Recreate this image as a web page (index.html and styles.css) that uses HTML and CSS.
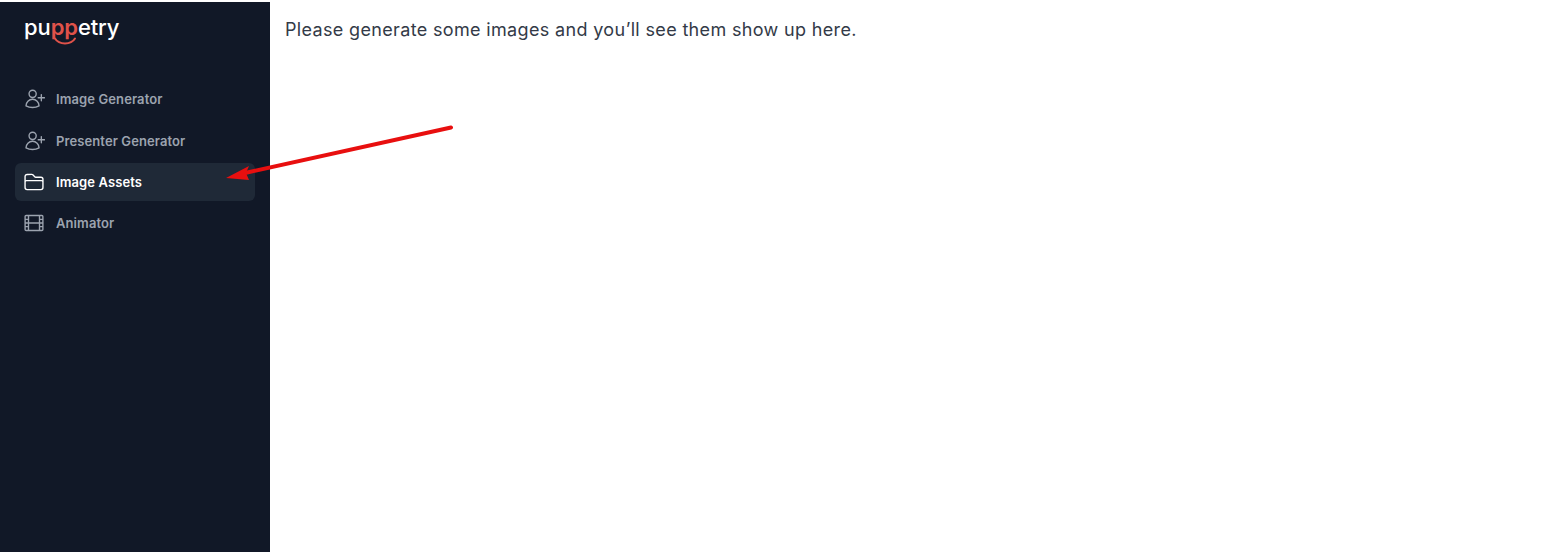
FILE: index.html
```html
<!DOCTYPE html>
<html lang="en">
<head>
<meta charset="utf-8">
<title>Puppetry</title>
<link rel="stylesheet" href="styles.css">
</head>
<body>
<div class="app">
  <aside class="sidebar">
    <div class="logo">
      <span class="logo-text">pu<span class="logo-pp">pp</span>etry</span>
      <svg class="logo-smile" viewBox="0 0 24 10" width="24" height="10" aria-hidden="true"><path d="M2 1.500C6 8 18 8 22 1.500" fill="none" stroke="#e0524a" stroke-width="2" stroke-linecap="round"/></svg>
    </div>
    <nav class="nav">
      <a class="nav-item">
        <svg class="nav-icon" viewBox="0 0 24 24" aria-hidden="true"><path d="M20 7.200v6.800M16.600 10.600h6.800M14.400 6.400a3.900 3.900 0 1 1-7.800 0 3.900 3.900 0 0 1 7.800 0ZM3.300 19.400a7.100 7.100 0 0 1 14.200 0v.100c-2.100 1.200-4.500 1.800-7.100 1.800s-5-.600-7.100-1.800v-.100Z"/></svg>
        <span>Image Generator</span>
      </a>
      <a class="nav-item">
        <svg class="nav-icon" viewBox="0 0 24 24" aria-hidden="true"><path d="M20 7.200v6.800M16.600 10.600h6.800M14.400 6.400a3.900 3.900 0 1 1-7.800 0 3.900 3.900 0 0 1 7.800 0ZM3.300 19.400a7.100 7.100 0 0 1 14.200 0v.100c-2.100 1.200-4.500 1.800-7.100 1.800s-5-.600-7.100-1.800v-.100Z"/></svg>
        <span>Presenter Generator</span>
      </a>
      <a class="nav-item active">
        <svg class="nav-icon" viewBox="0 0 24 24" aria-hidden="true"><path d="M2.250 12.750V12c0-.900.700-1.500 1.500-1.500h16.500c.800 0 1.500.600 1.500 1.500v.750M12.800 6.300l-2.100-2.100a1.500 1.500 0 0 0-1.100-.450H4.500a2.250 2.250 0 0 0-2.250 2.250v12c0 1.240 1 2.250 2.250 2.250h15c1.240 0 2.250-1 2.250-2.250v-9c0-1.240-1-2.250-2.250-2.250h-5.600a1.500 1.500 0 0 1-1.100-.450Z"/></svg>
        <span>Image Assets</span>
      </a>
      <a class="nav-item">
        <svg class="nav-icon" viewBox="0 0 24 24" aria-hidden="true"><path d="M3.400 3.800h17.200c.600 0 1.100.500 1.100 1.100v14.200c0 .600-.500 1.100-1.100 1.100H3.400c-.600 0-1.100-.500-1.100-1.100V4.900c0-.600.500-1.100 1.100-1.100ZM6 3.800v16.400M18 3.800v16.400M6 12h12M2.300 8H6M2.300 12H6M2.300 16H6M18 8h3.700M18 12h3.700M18 16h3.700"/></svg>
        <span>Animator</span>
      </a>
    </nav>
  </aside>
  <main class="main">
    <p class="empty">Please generate some images and you’ll see them show up here.</p>
  </main>
</div>
<svg class="arrow" viewBox="0 0 1561 552" width="1561" height="552" aria-hidden="true">
  <path d="M451 127.500L245 173" fill="none" stroke="#e80f0f" stroke-width="4" stroke-linecap="round"/>
  <path d="M226 178L249 166L246 173L249 180Z" fill="#e80f0f"/>
</svg>
</body>
</html>
```
FILE: styles.css
```css
* { box-sizing: border-box; }
html, body { margin: 0; height: 100%; background: #fff; }
body { font-family: Inter, "Liberation Sans", sans-serif; overflow: hidden; position: relative; }
.app { display: flex; height: 100%; padding-top: 2px; }
.sidebar { width: 270px; flex: none; background: #111827; padding: 0 15px; }
.logo { position: relative; height: 60px; padding: 10px 0 0 9px; }
.logo-text { font-family: Inter, sans-serif; font-size: 22px; font-weight: 500; line-height: 30px; color: #fff; letter-spacing: -.1px; }
.logo-pp { color: #e0524a; font-weight: 600; }
.logo-smile { position: absolute; left: 38px; top: 35px; }
.nav { display: flex; flex-direction: column; gap: 3px; margin-top: 18px; }
.nav-item { display: flex; align-items: center; gap: 11px; height: 38px; padding: 0 9px; border-radius: 6px; color: #9ca3af; font-size: 13px; font-weight: 600; letter-spacing: .1px; }
.nav-item:first-child { margin-bottom: 1px; }
.nav-item.active { background: #1f2937; color: #fff; }
.nav-icon { width: 22px; height: 22px; flex: none; margin-left: -1px; fill: none; stroke: currentColor; stroke-width: 1.500; stroke-linecap: round; stroke-linejoin: round; }
.main { flex: 1; padding: 15px; }
.empty { margin: 0; font-size: 18px; line-height: 25px; color: #333a47; letter-spacing: .34px; }
.arrow { position: absolute; left: 0; top: 0; pointer-events: none; }
```
